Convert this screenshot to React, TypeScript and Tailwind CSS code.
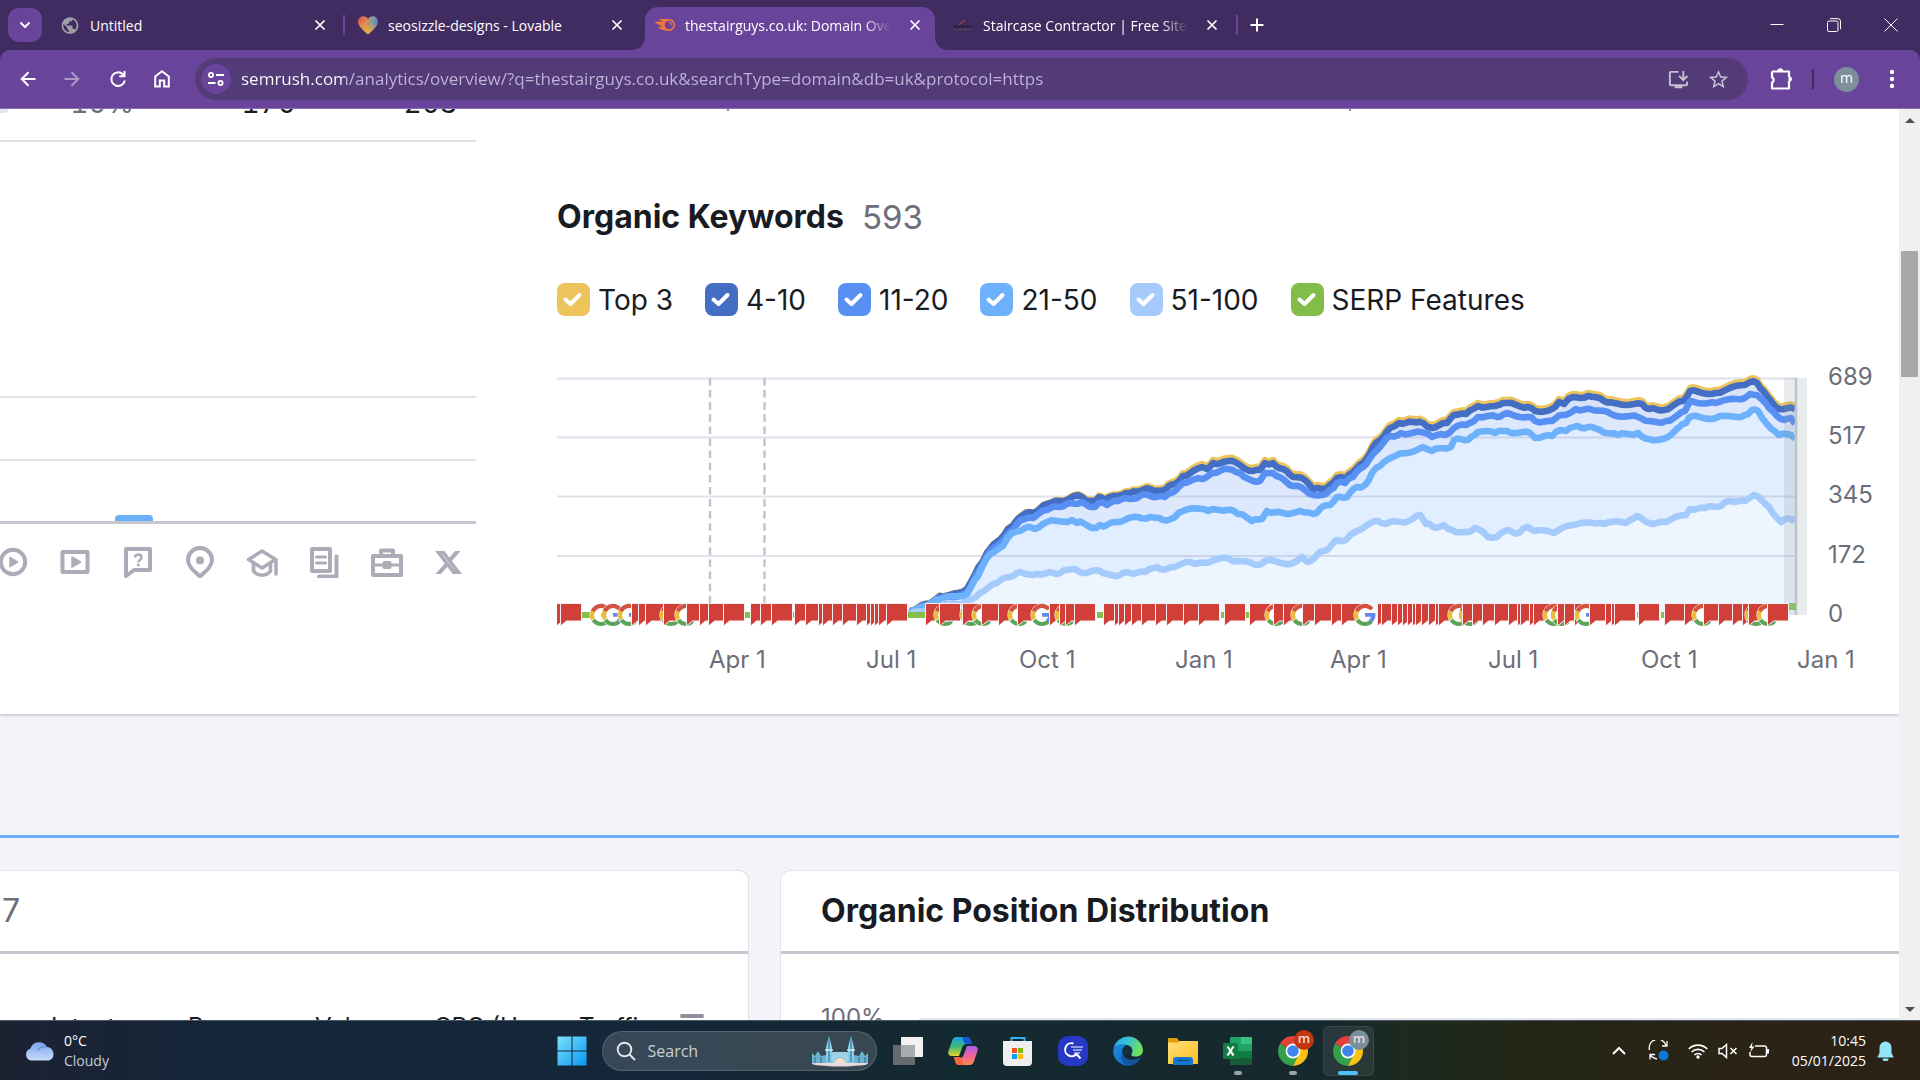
import React, { ReactNode } from "react";
import { FcGoogle } from "react-icons/fc";
import { SiSemrush } from "react-icons/si";
import { MdInstallDesktop, MdStarOutline, MdOutlineExtension, MdPublic } from "react-icons/md";
import { FaXTwitter } from "react-icons/fa6";

type Pt = [number, number];

/* ---------- Browser chrome ---------- */

function CloseX() {
  return (
    <svg viewBox="0 0 12 12" className="h-3 w-3" stroke="#fff" strokeWidth="1.7" fill="none">
      <path d="M1.5 1.5 10.5 10.5M10.5 1.5 1.5 10.5" />
    </svg>
  );
}

function Tab({ icon, title, active = false, fade = false, className = "" }: { icon: ReactNode; title: string; active?: boolean; fade?: boolean; className?: string }) {
  return (
    <div
      className={
        "flex shrink-0 items-center " +
        (active ? "relative h-[43px] self-end rounded-t-[13px] bg-[#68459a] pb-[7px] " : "h-[50px] ") +
        className
      }
    >
      {active && (
        <>
          <svg viewBox="0 0 13 13" className="absolute bottom-0 -left-[13px] h-[13px] w-[13px]" fill="#68459a"><path d="M13 0v13H0A13 13 0 0 0 13 0z" /></svg>
          <svg viewBox="0 0 13 13" className="absolute -right-[13px] bottom-0 h-[13px] w-[13px]" fill="#68459a"><path d="M0 0v13h13A13 13 0 0 1 0 0z" /></svg>
        </>
      )}
      <span className="flex h-5 w-5 shrink-0 items-center justify-center">{icon}</span>
      <button
        className={
          "ml-[10px] min-w-0 flex-1 overflow-hidden pt-[2px] text-left text-[14px] leading-5 whitespace-nowrap text-white " +
          (fade ? "[mask-image:linear-gradient(to_right,#000_86%,transparent_99%)]" : "")
        }
      >
        {title}
      </button>
      <button aria-label={"Close " + title} className="ml-[16px] shrink-0"><CloseX /></button>
    </div>
  );
}

function TabStrip() {
  return (
    <div className="flex h-[50px] items-center bg-[#412c62] pl-2">
      <button aria-label="Search tabs" className="flex h-[34px] w-[34px] shrink-0 items-center justify-center rounded-[11px] bg-[#68459a]">
        <svg viewBox="0 0 12 8" className="h-2 w-3" fill="none" stroke="#fff" strokeWidth="2"><path d="M1.5 1.5 6 6l4.500-4.500" /></svg>
      </button>
      <Tab className="ml-[18px] w-[266px]" title="Untitled" icon={<MdPublic className="h-[21px] w-[21px] text-[#9aa0a6]" />} />
      <div className="ml-[17px] h-5 w-[2px] shrink-0 bg-[#68459a]" />
      <Tab
        className="ml-[13px] w-[265px]"
        title="seosizzle-designs - Lovable"
        icon={
          <svg viewBox="0 0 20 19" className="h-[19px] w-5">
            <defs>
              <linearGradient id="heart" x1="0" y1="0" x2="1" y2="0.3">
                <stop offset="0" stopColor="#e0503f" /><stop offset=".45" stopColor="#d98a5a" /><stop offset=".75" stopColor="#7aa0a8" /><stop offset="1" stopColor="#4a78e0" />
              </linearGradient>
              <linearGradient id="heartLow" x1="0" y1="0" x2="0" y2="1">
                <stop offset=".3" stopColor="#e9a23a" stopOpacity="0" /><stop offset=".8" stopColor="#e9a840" />
              </linearGradient>
            </defs>
            <path d="M10 18.500C4 13 0 9.500 0 5.500A5.200 5.200 0 0 1 5.300.3C7.500.3 9.200 1.500 10 3 10.800 1.500 12.500.3 14.700.3A5.200 5.200 0 0 1 20 5.500c0 4-4 7.500-10 13z" fill="url(#heart)" />
            <path d="M10 18.500C4 13 0 9.500 0 5.500A5.200 5.200 0 0 1 5.300.3C7.500.3 9.200 1.500 10 3 10.800 1.500 12.500.3 14.700.3A5.200 5.200 0 0 1 20 5.500c0 4-4 7.500-10 13z" fill="url(#heartLow)" />
          </svg>
        }
      />
      <Tab active fade className="ml-[22px] w-[290px] pl-[10px] pr-[14px]" title="thestairguys.co.uk: Domain Overview" icon={<SiSemrush className="h-5 w-5 text-[#f0763c]" />} />
      <Tab
        fade
        className="ml-[18px] w-[265px]"
        title="Staircase Contractor | Free Site Meeting"
        icon={
          <svg viewBox="0 0 20 12" className="h-3 w-5">
            <path d="M6 6 12 1" stroke="#8a4a4a" strokeWidth="1.200" />
            <path d="M1 7.500h18" stroke="#241a38" strokeWidth="1.800" strokeDasharray="3 1" />
            <path d="M1 10.500h18" stroke="#64405c" strokeWidth="1" />
          </svg>
        }
      />
      <div className="ml-[18px] h-5 w-[2px] shrink-0 bg-[#68459a]" />
      <button aria-label="New tab" className="ml-[12px] shrink-0">
        <svg viewBox="0 0 14 14" className="h-[14px] w-[14px]" stroke="#fff" strokeWidth="2"><path d="M7 .5v13M.5 7h13" /></svg>
      </button>
      <div className="ml-auto flex items-center gap-[43px] pr-[22px]">
        <button aria-label="Minimise"><svg viewBox="0 0 14 14" className="h-[14px] w-[14px]" stroke="#fff"><path d="M.5 6.500h13" /></svg></button>
        <button aria-label="Restore">
          <svg viewBox="0 0 14 14" className="h-[14px] w-[14px]" stroke="#fff" fill="none"><rect x=".5" y="3" width="10.500" height="10.500" rx="1.500" /><path d="M3 .7h8a2.500 2.500 0 0 1 2.500 2.500v8" /></svg>
        </button>
        <button aria-label="Close window"><svg viewBox="0 0 14 14" className="h-[14px] w-[14px]" stroke="#fff" fill="none"><path d="M.5.5l13 13M13.500.5l-13 13" /></svg></button>
      </div>
    </div>
  );
}

function Toolbar() {
  const s = { fill: "none", stroke: "#fff", strokeWidth: 2 };
  return (
    <div className="bg-[#412c62]">
      <div className="flex h-[59px] items-center rounded-t-[10px] border-b border-[#8c6fb5] bg-[#68459a] pl-5">
        <button aria-label="Back"><svg viewBox="0 0 16 16" className="h-4 w-4" {...s}><path d="M15.500 8H2M8.500 1.200 1.700 8l6.800 6.800" /></svg></button>
        <button aria-label="Forward" className="ml-7 opacity-45"><svg viewBox="0 0 16 16" className="h-4 w-4" {...s}><path d="M.5 8H14M7.500 1.200 14.300 8l-6.800 6.800" /></svg></button>
        <button aria-label="Reload" className="ml-[29px]"><svg viewBox="0 0 18 18" className="h-[18px] w-[18px]" {...s}><path d="M15.800 10.500A6.800 6.800 0 1 1 13.800 4.200L15.500 6" /><path d="M15.500 1v5.200h-5.200" /></svg></button>
        <button aria-label="Home" className="ml-[27px]"><svg viewBox="0 0 16 18" className="h-[18px] w-4" {...s}><path d="M1.200 16.500V6.500L8 1.300l6.800 5.200v10h-4.600v-6H5.800v6z" /></svg></button>
        <div className="ml-[25px] flex h-[42px] min-w-0 flex-1 items-center rounded-full bg-[#533b78] pl-[6px] pr-[18px]">
          <button aria-label="Site information" className="flex h-[30px] w-[30px] shrink-0 items-center justify-center rounded-full bg-[#68459a]">
            <svg viewBox="0 0 16 14" className="h-[14px] w-4" fill="none" stroke="#fff" strokeWidth="1.800"><circle cx="3" cy="3" r="2.100" /><path d="M8 3h8M0 11h7.500" /><circle cx="12.500" cy="11" r="2.100" /></svg>
          </button>
          <input
            aria-label="Address"
            className="ml-[10px] min-w-0 flex-1 bg-[linear-gradient(to_right,#ffffff_104px,#c3b3dc_104px)] bg-clip-text text-[17px] leading-6 text-transparent outline-none"
            defaultValue="semrush.com/analytics/overview/?q=thestairguys.co.uk&searchType=domain&db=uk&protocol=https"
          />
          <button aria-label="Install app"><MdInstallDesktop className="h-[23px] w-[23px] text-[#c8bfd0]" /></button>
          <button aria-label="Bookmark" className="ml-[17px]"><MdStarOutline className="h-[23px] w-[23px] text-[#c8bfd0]" /></button>
        </div>
        <button aria-label="Extensions" className="ml-[22px]">
          <svg viewBox="0 0 22 24" className="h-6 w-[22px]" fill="none" stroke="#fff" strokeWidth="2.200" strokeLinejoin="round">
            <path d="M2 4.500h17v5.500M19 14v7.500H2v-5.700a3.200 3.200 0 0 0 0-5.600V4.500" />
            <path d="M7.500 4.500a2.800 2.800 0 0 1 5.600 0zM19 9.500a2.500 2.500 0 0 1 0 5z" fill="#fff" strokeWidth="1" />
          </svg>
        </button>
        <div className="ml-[20px] h-5 w-[2px] bg-[#412c62]" />
        <button aria-label="Profile" className="ml-[20px] flex h-[25px] w-[25px] items-center justify-center rounded-full bg-[#7e8f9c] pb-[2px] text-[14px] leading-none text-white">m</button>
        <button aria-label="Menu" className="ml-[30px] mr-[25px]">
          <svg viewBox="0 0 6 20" className="h-5 w-[6px]" fill="#fff"><circle cx="3" cy="3" r="2.200" /><circle cx="3" cy="10" r="2.200" /><circle cx="3" cy="17" r="2.200" /></svg>
        </button>
      </div>
    </div>
  );
}

/* ---------- Left SERP feature column ---------- */

function SerpIcons() {
  const base = "h-8 w-8 justify-self-center";
  const st = { fill: "none", stroke: "#abacb8", strokeWidth: 4, strokeLinejoin: "round" as const };
  return (
    <div className="-ml-[18px] mt-[22px] grid w-[498px] grid-cols-8 items-center">
      <svg viewBox="0 0 32 32" className={base} {...st}><circle cx="16" cy="16" r="12.200" /><path d="M13 11.500 20.500 16 13 20.500z" fill="#abacb8" strokeWidth="1.500" /></svg>
      <svg viewBox="0 0 32 32" className={base} {...st}><rect x="3.500" y="6" width="25" height="20" /><path d="M13 11 21.500 16 13 21z" fill="#abacb8" strokeWidth="1.500" /></svg>
      <svg viewBox="0 0 32 32" className={base} {...st}><path d="M4 3h24v21H12l-8 6z" /><path d="M13 11.500c0-4 6.500-4 6.500 0 0 2.500-3.200 2.500-3.200 5" strokeWidth="2.400" /><circle cx="16.300" cy="19" r=".6" strokeWidth="1.800" /></svg>
      <svg viewBox="0 0 32 32" className={base} {...st}><path d="M16 30.500C9 24 4 20 4 14a12 12 0 0 1 24 0c0 6-5 10-12 16.500z" /><circle cx="16" cy="14.500" r="4" fill="#abacb8" stroke="none" /></svg>
      <svg viewBox="0 0 32 32" className={base} {...st} strokeWidth={3.6}><path d="M2.500 13.500 16 5l13.500 8.500L16 22z" /><path d="M7.500 17.500V25c4 5.500 13 5.500 17 0v-7.500" /><path d="M30 14v14" strokeLinecap="round" /></svg>
      <svg viewBox="0 0 32 32" className={base} {...st}><path d="M4 3h18v22H4z" /><path d="M8.500 11h9M8.500 17h9" strokeWidth="3" strokeLinecap="round" /><path d="M28.500 10.500v20H11" strokeLinecap="round" /></svg>
      <svg viewBox="0 0 34 32" className="h-8 w-[34px] justify-self-center" {...st}><path d="M3 10h28v19H3zM11 10V4.500h12V10" /><path d="M3 19h28" strokeWidth="3" /><rect x="14.500" y="17" width="5" height="4" fill="#abacb8" /></svg>
      <FaXTwitter className="h-[27px] w-[27px] justify-self-center overflow-visible stroke-[#abacb8] stroke-[24] text-[#abacb8]" />
    </div>
  );
}

function FeatureColumn() {
  return (
    <div className="w-[476px] shrink-0">
      <div className="flex h-[31px] tabular-nums">
        <div className="h-[4px] w-2 rounded-br-[8px] bg-[#e4e5ea]" />
        <div className="-mt-5 w-[126px] text-right text-[28px] leading-7 text-[#6c6e79]">10%</div>
        <div className="-mt-5 w-[162px] text-right text-[28px] leading-7">170</div>
        <div className="-mt-5 w-[162px] text-right text-[28px] leading-7">203</div>
      </div>
      <div className="h-[2px] bg-[#e0e1e6]" />
      <div className="h-[256px] border-b-2 border-[#e0e1e9]" />
      <div className="h-[63px] border-b-2 border-[#e0e1e9]" />
      <div className="flex h-[63px] items-end border-b-[3px] border-[#c4c7cf]">
        <div className="ml-[115px] h-[6px] w-[38px] rounded-t-[4px] bg-[#6cb0fa]" />
      </div>
      <SerpIcons />
    </div>
  );
}

/* ---------- Organic keywords chart ---------- */

const DARK: Pt[] = [
  [910,611],[926,604],[940,596],[950,595],[967,589],[972,580],[978,568],[987,553],[997,542],[1008,529],[1017,520],[1023,515],[1033,513],[1047,504],[1060,501],[1072,497],[1082,497],[1090,501],[1095,501],[1099,497],[1105,500],[1118,496],[1130,493],[1140,491],[1150,489],[1165,490],[1175,484],[1183,476],[1193,471],[1202,467],[1207,469],[1213,463],[1228,461],[1240,465],[1253,471],[1260,470],[1265,463],[1273,463],[1283,469],[1293,477],[1305,480],[1313,489],[1322,489],[1330,485],[1337,478],[1345,479],[1353,472],[1363,463],[1373,447],[1380,440],[1390,428],[1399,423],[1413,422],[1423,423],[1432,428],[1447,423],[1454,415],[1466,414],[1478,406],[1495,406],[1507,403],[1528,407],[1535,411],[1552,409],[1559,402],[1564,404],[1573,397],[1588,396],[1604,401],[1614,403],[1642,404],[1649,409],[1664,410],[1683,401],[1690,391],[1716,393],[1745,385],[1750,382],[1757,383],[1767,396],[1779,409],[1795,409],
];
const MEDIUM: Pt[] = [
  [910,612],[926,606],[940,598],[950,597],[967,592],[978,572],[987,556],[997,546],[1010,532],[1017,524],[1025,519],[1033,518],[1047,510],[1060,507],[1070,503],[1082,502],[1090,507],[1095,507],[1099,503],[1107,505],[1118,501],[1130,499],[1140,496],[1150,496],[1165,497],[1175,491],[1183,483],[1202,479],[1213,473],[1228,469],[1240,473],[1253,481],[1260,481],[1265,473],[1273,473],[1283,479],[1293,486],[1305,490],[1313,495],[1322,495],[1330,490],[1337,483],[1345,483],[1353,477],[1363,467],[1373,454],[1380,447],[1390,436],[1401,433],[1421,432],[1432,437],[1445,435],[1454,428],[1466,425],[1478,417],[1497,417],[1507,413],[1528,417],[1535,421],[1552,421],[1562,415],[1576,409],[1590,409],[1611,414],[1638,417],[1649,421],[1666,421],[1685,411],[1690,401],[1716,403],[1745,398],[1750,394],[1757,395],[1769,408],[1781,419],[1791,418],[1795,424],
];
const LIGHT: Pt[] = [
  [910,613],[926,606],[940,600],[967,594],[978,576],[987,558],[997,550],[1003,546],[1012,533],[1025,528],[1035,529],[1047,522],[1072,520],[1077,523],[1083,523],[1092,528],[1100,525],[1107,525],[1120,522],[1138,517],[1150,517],[1163,520],[1175,517],[1183,511],[1202,509],[1208,511],[1227,510],[1238,514],[1252,521],[1262,519],[1267,511],[1283,513],[1300,511],[1313,514],[1320,509],[1330,505],[1337,497],[1347,497],[1357,487],[1365,485],[1372,473],[1380,466],[1397,455],[1423,447],[1432,451],[1451,447],[1454,440],[1468,440],[1478,432],[1495,433],[1507,431],[1530,433],[1535,438],[1552,436],[1561,430],[1566,431],[1578,426],[1588,427],[1600,430],[1618,435],[1638,433],[1649,439],[1666,438],[1686,423],[1692,416],[1716,418],[1745,415],[1752,410],[1758,411],[1767,424],[1779,435],[1791,435],[1795,439],
];
const PALE: Pt[] = [
  [910,614],[940,606],[968,601],[980,593],[997,583],[1010,577],[1020,572],[1037,574],[1050,572],[1060,573],[1075,569],[1087,573],[1100,571],[1110,575],[1120,575],[1130,573],[1145,572],[1157,567],[1167,569],[1177,566],[1190,562],[1207,563],[1228,558],[1237,561],[1255,565],[1265,561],[1293,563],[1302,557],[1307,562],[1317,555],[1327,550],[1337,540],[1347,539],[1357,531],[1378,521],[1388,523],[1409,521],[1420,515],[1426,524],[1433,527],[1444,525],[1452,530],[1468,532],[1475,528],[1488,537],[1497,537],[1509,530],[1519,533],[1528,527],[1535,531],[1554,533],[1573,525],[1600,523],[1626,523],[1637,516],[1649,523],[1666,522],[1686,515],[1690,509],[1705,508],[1721,506],[1731,501],[1745,501],[1754,495],[1769,507],[1781,522],[1791,519],[1795,521],
];
const TOTAL: Pt[] = DARK.map(([x, y]) => [x, y - Math.min(3, Math.max(0.4, (x - 1020) / 60))]);

/* Daily samples between the weekly points give the lines their uneven edge. */
function daily(points: Pt[], seed: number): Pt[] {
  const out: Pt[] = [];
  for (let i = 0; i < points.length - 1; i++) {
    const [x0, y0] = points[i];
    const [x1, y1] = points[i + 1];
    const steps = Math.max(1, Math.round((x1 - x0) / 4));
    for (let k = 0; k < steps; k++) {
      const t = k / steps;
      const wobble = k === 0 ? 0 : Math.sin((x0 + k * 3) * 2.3 + seed) * 1.6;
      out.push([x0 + (x1 - x0) * t, y0 + (y1 - y0) * t + wobble]);
    }
  }
  out.push(points[points.length - 1]);
  return out;
}
const line = (p: Pt[], seed: number) => "M" + daily(p, seed).map(([x, y]) => x.toFixed(1) + " " + y.toFixed(1)).join("L");
const area = (p: Pt[], seed: number) => line(p, seed) + "L1795 615L910 615Z";

const FLAGS: (number | [number])[] = [
  557,561,[590],[602],[618],632,639,646,[660],664,[675],687,700,709,724,751,761,772,795,806,819,823,833,843,857,867,871,875,879,887,
  926,[934],940,[960],963,[972],982,999,[1008],1018,[1031],1050,[1055],1060,1066,1075,1104,1115,1119,1125,1132,1142,1156,1167,1184,1199,1225,1250,[1265],1274,1284,[1291],1303,1315,1332,1342,[1354],
  1378,1382,1392,1398,1403,1408,1413,1416,1422,1429,1436,1439,[1448],[1459],1463,1473,1483,1495,1509,1518,1521,1530,1534,[1543],[1551],1558,1565,1575,[1575],1590,1606,1612,1615,1639,1665,1685,[1692],1704,1719,1733,1743,[1745],1749,[1757],1768,
];
const GREEN: Pt[] = [[582,8],[745,6],[793,2],[908,18],[1097,7],[1221,4],[1246,4],[1637,2],[1661,4]];

function KeywordsChart() {
  const series: [Pt[], string, number][] = [
    [TOTAL, "#edc35b", 1],[DARK, "#436ec4", 1],[MEDIUM, "#588ff3", 2],[LIGHT, "#6db0fb", 3],[PALE, "#a5cbfd", 4],
  ];
  return (
    <svg viewBox="557 366 1342 324" className="mt-[50px] block w-full" role="img" aria-label="Organic keywords over time">
      <path d={area(DARK, 1)} fill="#d9e3f8" />
      <path d={area(MEDIUM, 2)} fill="#dde8fc" />
      <path d={area(LIGHT, 3)} fill="#e0eeff" />
      <path d={area(PALE, 4)} fill="#edf5ff" />
      <path d="M557 378.500H1797M557 437.500H1797M557 496.500H1797M557 556H1797" stroke="#8287af" strokeOpacity=".25" strokeWidth="2.200" />
      <path d="M710 378V604M764.500 378V604" stroke="#c0c4c9" strokeWidth="2.400" strokeDasharray="7.500 4.600" />
      {series.map(([p, color, seed]) => (
        <path key={color} d={line(p, seed)} fill="none" stroke={color} strokeWidth="6.600" strokeLinejoin="round" />
      ))}
      <rect x="1784" y="378" width="23" height="237" fill="#8c9a98" fillOpacity=".19" />
      <path d="M1796 378V615" stroke="#bcc3c9" strokeWidth="2.500" />
      {GREEN.map(([x, w]) => <rect key={x} x={x} y="612" width={w} height="6" fill="#82bf4b" />)}
      <rect x="1789" y="603" width="7" height="7" fill="#8dc165" />
      {FLAGS.map((f, i) =>
        typeof f === "number" ? (
          <path key={i} d={`M${f - 0.5} 603.500h21v17.500h-15l-6 5z`} fill="#d04038" stroke="#fbeeee" strokeWidth="1" />
        ) : (
          <g key={i}>
            <circle cx={f[0] + 11} cy="615" r="11.500" fill="#fff" />
            <circle cx={f[0] + 11} cy="615" r="9" fill="none" stroke="#5ba55a" strokeWidth="4.200" strokeDasharray="16 41" transform={`rotate(45 ${f[0] + 11} 615)`} />
            <circle cx={f[0] + 11} cy="615" r="9" fill="none" stroke="#eabd3c" strokeWidth="4.200" strokeDasharray="9 48" transform={`rotate(152 ${f[0] + 11} 615)`} />
            <circle cx={f[0] + 11} cy="615" r="9" fill="none" stroke="#d2533f" strokeWidth="4.200" strokeDasharray="18 39" transform={`rotate(205 ${f[0] + 11} 615)`} />
            <path d={`M${f[0] + 11} 613h10.500c.4 4-1 7.500-3.700 9.800l-3-2.800c1.200-.9 2-2 2.300-3.200h-6.100z`} fill="#6387ec" />
          </g>
        ),
      )}
      <g fill="#6c6e79" fontSize="24" fontFamily="Inter, sans-serif">
        <text x="709" y="668">Apr 1</text>
        <text x="866" y="668">Jul 1</text>
        <text x="1019" y="668">Oct 1</text>
        <text x="1175" y="668">Jan 1</text>
        <text x="1330" y="668">Apr 1</text>
        <text x="1488" y="668">Jul 1</text>
        <text x="1641" y="668">Oct 1</text>
        <text x="1797" y="668">Jan 1</text>
        <text x="1828" y="385">689</text>
        <text x="1828" y="444">517</text>
        <text x="1828" y="503">345</text>
        <text x="1828" y="563">172</text>
        <text x="1828" y="622">0</text>
      </g>
    </svg>
  );
}

function LegendItem({ label, box }: { label: string; box: string }) {
  return (
    <label className="flex items-center gap-2 text-[28px] leading-[33px] whitespace-nowrap">
      <span className="relative block h-[33px] w-[33px]">
        <input type="checkbox" defaultChecked className={"block h-[33px] w-[33px] appearance-none rounded-[8px] " + box} />
        <svg viewBox="0 0 33 33" className="pointer-events-none absolute inset-0" fill="none" stroke="#fff" strokeWidth="4" strokeLinecap="round" strokeLinejoin="round"><path d="M8.500 16.500l5 4.500 9-9" /></svg>
      </span>
      <span className="pt-[2px]">{label}</span>
    </label>
  );
}

function KeywordsPanel() {
  return (
    <section className="relative ml-[81px] min-w-0 flex-1 pt-[89px] pb-6">
      <span className="absolute top-0 left-[170px] h-[2px] w-[2px] bg-[#8a8c98]" />
      <span className="absolute top-0 left-[792px] h-[2px] w-[2px] bg-[#8a8c98]" />
      <h2 className="flex gap-[18px] text-[32px] leading-[38px] font-bold">
        Organic Keywords <span className="text-[33px] font-normal text-[#6c6e79]">593</span>
      </h2>
      <div className="mt-[47px] flex h-[33px] items-center gap-8">
        <LegendItem label="Top 3" box="bg-[#edc35b]" />
        <LegendItem label="4-10" box="bg-[#436ec4]" />
        <LegendItem label="11-20" box="bg-[#588ff3]" />
        <LegendItem label="21-50" box="bg-[#6db0fb]" />
        <LegendItem label="51-100" box="bg-[#a5cbfd]" />
        <LegendItem label="SERP Features" box="bg-[#81bd48]" />
      </div>
      <KeywordsChart />
    </section>
  );
}

function LowerCards() {
  return (
    <div className="flex h-[240px] pt-[32px]">
      <section className="w-[749px] shrink-0 overflow-hidden rounded-tr-[10px] border-t border-r border-[#e0e1e9] bg-white">
        <div className="flex h-[83px] items-center border-b-[3px] border-[#c4c7cf] pl-[2px] text-[32px] text-[#6c6e79]">7</div>
        <table className="mt-[61px] w-[720px] table-fixed text-[24px] leading-6">
          <thead>
            <tr className="text-left align-top whitespace-nowrap [&>th]:p-0 [&>th]:font-normal">
              <th className="w-[51px]" aria-label="Keyword" />
              <th className="w-[137px]">Intent</th>
              <th className="w-[127px]">Pos.</th>
              <th className="w-[119px]">Volume</th>
              <th className="w-[145px]">CPC (U...</th>
              <th className="w-[101px]">Traffic</th>
              <th className="align-top"><span className="block h-[4px] w-6 -translate-y-px rounded bg-[#8f919d]" /></th>
            </tr>
          </thead>
        </table>
      </section>
      <section className="ml-[31px] min-w-0 flex-1 rounded-tl-[10px] border-t border-l border-[#e0e1e9] bg-white">
        <h2 className="flex h-[83px] items-center border-b-[3px] border-[#c4c7cf] pl-[40px] text-[32px] font-bold whitespace-nowrap">Organic Position Distribution</h2>
        <div className="mt-[52px] flex items-start pl-[40px] text-[24px] leading-6 text-[#6c6e79]">
          100%
          <div className="mt-[12px] ml-[34px] h-[2px] flex-1 bg-[#e8e9ee]" />
        </div>
      </section>
    </div>
  );
}

/* ---------- Taskbar ---------- */

function Chrome({ badge, id }: { badge: string; id: string }) {
  return (
    <span className="relative block">
      <svg viewBox="0 0 30 30" className="h-[30px] w-[30px]">
        <defs><clipPath id={id}><circle cx="15" cy="15" r="15" /></clipPath></defs>
        <g clipPath={"url(#" + id + ")"}>
          <path d="M15 15 2 7.500-5 20l18 14 8.500-15z" fill="#34a04a" />
          <path d="M15 15 2 7.500V-5h30v13.500H15z" fill="#e0413a" />
          <path d="M15 8.200h20V35H12.500l8.400-16.500z" fill="#fbc116" />
        </g>
        <circle cx="15" cy="15" r="7.400" fill="#fff" /><circle cx="15" cy="15" r="5.800" fill="#4084ee" />
      </svg>
      <span className={"absolute -top-[6px] left-4 flex h-5 w-5 items-center justify-center rounded-full pb-[2px] text-[13px] leading-none font-semibold text-[#f0dcd4] " + badge}>m</span>
    </span>
  );
}

function TaskButton({ label, children, active = false, mark = "" }: { label: string; children: ReactNode; active?: boolean; mark?: string }) {
  return (
    <button aria-label={label} className={"relative mx-[2px] flex h-[50px] w-[51px] items-center justify-center rounded-[6px] " + (active ? "bg-white/8 ring-1 ring-white/8 ring-inset" : "")}>
      {children}
      {mark && <span className={"absolute bottom-[1px] left-1/2 h-1 -translate-x-1/2 rounded-full " + mark} />}
    </button>
  );
}

function Taskbar() {
  return (
    <footer className="grid h-[60px] shrink-0 grid-cols-[1fr_auto_1fr] items-center border-t border-[#4c5663] bg-[linear-gradient(to_right,#1c2232_0%,#14263a_12%,#14283a_35%,#142a31_50%,#15282d_69%,#1c2a20_73%,#242615_80%,#2a2316_92%,#2c2216_100%)] text-[14px] text-white">
      <button className="ml-[24px] flex items-center justify-self-start text-left">
        <svg viewBox="0 0 32 22" className="h-[22px] w-8">
          <defs><linearGradient id="cloud" x1="0" y1="0" x2="0" y2="1"><stop offset="0" stopColor="#7ba4f0" /><stop offset="1" stopColor="#c9dcfb" /></linearGradient></defs>
          <path d="M7 20.500A6.200 6.200 0 0 1 6.500 8.500 9 9 0 0 1 23 7a7 7 0 0 1 2 13.500z" fill="url(#cloud)" />
          <path d="M14 10.500a8 8 0 0 1 9-3.500" stroke="#6c8fe0" strokeWidth="1.500" fill="none" />
        </svg>
        <span className="ml-2">
          <span className="block leading-5">0°C</span>
          <span className="block leading-5 text-[#c6ccd4]">Cloudy</span>
        </span>
      </button>
      <div className="flex items-center pl-3">
        <button aria-label="Start">
          <svg viewBox="0 0 30 30" className="h-[30px] w-[30px]">
            <defs><linearGradient id="win" x1="0" y1="0" x2="1" y2="1"><stop offset="0" stopColor="#7de0fb" /><stop offset="1" stopColor="#0797f5" /></linearGradient></defs>
            <path d="M.5.5h14v14H.5zM15.500.5h14v14h-14zM.5 15.500h14v14H.5zM15.500 15.500h14v14h-14z" fill="url(#win)" />
          </svg>
        </button>
        <label className="ml-[15px] flex h-10 w-[275px] items-center rounded-full border border-white/15 bg-white/15 pl-[13px] pr-[7px]">
          <svg viewBox="0 0 20 20" className="h-5 w-5 shrink-0" fill="none" stroke="#e4e8ea" strokeWidth="1.900"><circle cx="8.500" cy="8.500" r="6.800" /><path d="M13.500 13.500 19 19" /></svg>
          <input placeholder="Search" aria-label="Search" className="ml-[12px] w-full min-w-0 flex-1 bg-transparent text-[16px] outline-none placeholder:text-[#c9d0d4]" />
          <svg viewBox="0 0 58 32" className="h-8 w-[58px] shrink-0">
            <ellipse cx="29" cy="28.500" rx="28" ry="3" fill="#ead9da" />
            <path d="M1 28V18l3 3 3-5 3 5 5-1v8zM57 28V18l-3 3-3-5-3 5-5-1v8z" fill="#6fb2cf" />
            <path d="M4 22v6M10 22v6M48 22v6M54 22v6" stroke="#3d83b0" strokeWidth="1.500" />
            <path d="M15 28V12l3-11 3 11v16zM37 28V12l3-11 3 11v16z" fill="#8accdf" />
            <path d="M18 2v25M40 2v25" stroke="#4391bd" strokeWidth="1.600" />
            <path d="M14 15h8M36 15h8" stroke="#d5eef4" strokeWidth="1.500" />
            <path d="M21 28V17h16v11h-3c0-7-10-7-10 0z" fill="#9ad3e6" />
            <path d="M24 28c0-7 10-7 10 0z" fill="#f6dfca" />
          </svg>
        </label>
        <div className="ml-[4px] flex">
          <TaskButton label="Task view">
            <svg viewBox="0 0 30 28" className="h-7 w-[30px]"><rect x="8" y="0" width="22" height="20" rx="1" fill="#f2f2f2" /><rect x="0" y="8" width="22" height="20" rx="1" fill="#686b6d" /><path d="M8 8h14v12H8z" fill="#a9abac" /></svg>
          </TaskButton>
          <TaskButton label="Copilot">
            <svg viewBox="0 0 30 28" className="h-7 w-[30px]">
              <defs>
                <linearGradient id="cpA" x1="0" y1="0" x2="0" y2="1"><stop offset="0" stopColor="#19a0e8" /><stop offset=".5" stopColor="#3fb878" /><stop offset="1" stopColor="#e8d030" /></linearGradient>
                <linearGradient id="cpB" x1="0" y1="0" x2="0" y2="1"><stop offset="0" stopColor="#a560ee" /><stop offset=".5" stopColor="#f0649a" /><stop offset="1" stopColor="#fb8a4c" /></linearGradient>
              </defs>
              <path d="M8 0h11c2 0 3 1 3.500 3L24 7h-5c-3 0-4 1-5 4l-3 8H4c-3 0-4.500-2-3.500-5L4 4c.8-2.500 2-4 4-4z" fill="url(#cpA)" />
              <path d="M14 0h5c2 0 3 1 3.500 3L24 7h-5c-2 0-3-1-3.500-3C15 2 15 1 14 0z" fill="#1a52cf" />
              <path d="M22 28H11c-2 0-3-1-3.500-3L6 21h5c3 0 4-1 5-4l3-8h7c3 0 4.500 2 3.500 5L26 24c-.8 2.500-2 4-4 4z" fill="url(#cpB)" />
              <path d="M11 28c-2 0-3-1-3.500-3L6 20h5c2 0 2.500 1 3 3s1 4 1 5z" fill="#f4693f" />
            </svg>
          </TaskButton>
          <TaskButton label="Microsoft Store">
            <svg viewBox="0 0 30 30" className="h-[30px] w-[30px]"><path d="M8.500 6V2h13v4" stroke="#2cb5ef" strokeWidth="2" fill="none" /><path d="M0 5h29v21a4 4 0 0 1-4 4H4a4 4 0 0 1-4-4z" fill="#efefef" /><path d="M9 12h5v5H9z" fill="#f25022" /><path d="M15 12h5v5h-5z" fill="#7fba00" /><path d="M9 18h5v5H9z" fill="#00a4ef" /><path d="M15 18h5v5h-5z" fill="#ffb900" /></svg>
          </TaskButton>
          <TaskButton label="Search tool">
            <svg viewBox="0 0 30 30" className="h-[30px] w-[30px]" fill="none" stroke="#fff"><rect width="30" height="30" rx="10" fill="#2638c4" stroke="none" /><path d="M15.500 7.500a6.500 6.500 0 1 0 3 10.500M18 17.500l4.500 5" strokeWidth="2" /><path d="M13 11h12M15 14h9M16 17h6" strokeWidth="1.200" /></svg>
          </TaskButton>
          <TaskButton label="Edge">
            <svg viewBox="0 0 30 30" className="h-[30px] w-[30px]">
              <defs>
                <linearGradient id="edgeTop" x1="0" y1="0" x2="1" y2=".3"><stop offset="0" stopColor="#28a8e0" /><stop offset=".5" stopColor="#35c1d6" /><stop offset="1" stopColor="#6fe05c" /></linearGradient>
                <linearGradient id="edgeLow" x1="0" y1="0" x2="1" y2="1"><stop offset="0" stopColor="#1b8ee0" /><stop offset="1" stopColor="#0c62c0" /></linearGradient>
              </defs>
              <path d="M.5 12A15 15 0 0 1 30 14c0 5-4 6.500-7.500 6.500-3 0-5-1-4-2.500 2-2.500 1-8-4.500-9C8 8 2 10 .5 12z" fill="url(#edgeTop)" />
              <path d="M.2 14C1.500 9.500 8 7 13 9.500c-3 1.500-4 4-4 7 0 5 3.500 10 9 13A15 15 0 0 1 .2 14z" fill="url(#edgeLow)" />
              <path d="M10.500 14c-2.500 7 5 13 17 7.500-2 4.500-6.500 8-11.500 8.500-6-1-10.500-9-5.500-16z" fill="#1256a0" />
              <circle cx="15" cy="15.500" r="3.600" fill="#12303c" />
            </svg>
          </TaskButton>
          <TaskButton label="File Explorer">
            <svg viewBox="0 0 30 28" className="h-7 w-[30px]">
              <defs><linearGradient id="fold" x1="0" y1="0" x2="1" y2="1"><stop offset="0" stopColor="#ffe07a" /><stop offset="1" stopColor="#fbbd22" /></linearGradient></defs>
              <path d="M0 2a1 1 0 0 1 1-1h8l3 4h17v6H0z" fill="#dd9f0a" /><path d="M0 5.500h10l2-1.500h17a1 1 0 0 1 1 1v22H0z" fill="url(#fold)" />
              <path d="M5 28v-5a3 3 0 0 1 3-3h14a3 3 0 0 1 3 3v5z" fill="#1478d0" /><path d="M9 23.500h12" stroke="#0b4f98" strokeWidth="1.500" />
            </svg>
          </TaskButton>
          <TaskButton label="Excel" mark="w-2 bg-[#9ca3a6]">
            <svg viewBox="0 0 30 28" className="h-7 w-[30px]"><path d="M7 1a1 1 0 0 1 1-1h10v28H8a1 1 0 0 1-1-1z" fill="#21a366" /><path d="M18 0h10a1 1 0 0 1 1 1v6H18z" fill="#33c481" /><path d="M18 7h11v7H18z" fill="#21a366" /><path d="M7 14h22v7H7z" fill="#107c41" /><path d="M7 21h22v6a1 1 0 0 1-1 1H8a1 1 0 0 1-1-1z" fill="#185c37" /><rect y="6" width="15" height="16" rx="1" fill="#107c41" /><path d="M4.500 9.500l6 9M10.500 9.500l-6 9" stroke="#fff" strokeWidth="2.200" /></svg>
          </TaskButton>
          <TaskButton label="Chrome" mark="w-2 bg-[#9ca3a6]"><Chrome id="chromeA" badge="bg-[#c2350f]" /></TaskButton>
          <TaskButton label="Chrome, current window" active mark="w-5 bg-[#4cc2ff]"><Chrome id="chromeB" badge="bg-[#78909c]" /></TaskButton>
        </div>
      </div>
      <div className="mr-[26px] flex items-center justify-self-end">
        <button aria-label="Hidden icons"><svg viewBox="0 0 14 9" className="h-[9px] w-[14px]" fill="none" stroke="#fff" strokeWidth="2"><path d="M1 8l6-6 6 6" /></svg></button>
        <button aria-label="Sync" className="ml-[22px]"><svg viewBox="0 0 21 21" className="h-[21px] w-[21px]" fill="none" stroke="#fff" strokeWidth="1.300"><path d="M1.500 10A8.500 8.500 0 0 1 18 5.500M19 1v5h-5M9 19a9 9 0 0 1-6.500-4M2 19.500v-5h5" /><circle cx="15.500" cy="15.500" r="5" fill="#0b78d8" stroke="none" /></svg></button>
        <button aria-label="Network, volume and battery" className="ml-[19px] flex items-center gap-[10px]">
          <svg viewBox="0 0 20 16" className="h-4 w-5" fill="none" stroke="#fff" strokeWidth="1.700"><path d="M.8 6a13 13 0 0 1 18.400 0M3.600 9a9 9 0 0 1 12.800 0M6.400 12a5.200 5.200 0 0 1 7.200 0" /><circle cx="10" cy="14" r="1.700" fill="#fff" stroke="none" /></svg>
          <svg viewBox="0 0 20 16" className="h-4 w-5" fill="none" stroke="#fff" strokeWidth="1.500"><path d="M1 5.500h3L8.500 1.500v13L4 10.500H1z" /><path d="M12.500 5l6 6M18.500 5l-6 6" /></svg>
          <svg viewBox="0 0 21 17" className="h-[17px] w-[21px]" fill="none" stroke="#fff" strokeWidth="1.500"><path d="M7 4h9.500a2 2 0 0 1 2 2v6.500a2 2 0 0 1-2 2H4a2 2 0 0 1-2-2V10" /><path d="M20 7v4.500" strokeWidth="2" /><path d="M4.500 0 1 6h2.500L2 10.500 6.500 4.500H4z" fill="#fff" stroke="none" /></svg>
        </button>
        <button className="ml-[23px] text-right">
          <span className="block leading-5">10:45</span>
          <span className="block leading-5">05/01/2025</span>
        </button>
        <button aria-label="Notifications" className="ml-[11px]"><svg viewBox="0 0 17 20" className="h-5 w-[17px]" fill="#93e3fb"><path d="M8.500.5a6 6 0 0 1 6 6v5.500l2 4v.5H.5V16l2-4V6.500a6 6 0 0 1 6-6z" /><path d="M5.500 17.500h6a3 3 0 0 1-6 0z" /></svg></button>
      </div>
    </footer>
  );
}

export default function App() {
  return (
    <div className="flex h-screen flex-col overflow-hidden font-['Open_Sans','Noto_Sans',sans-serif]">
      <TabStrip />
      <Toolbar />
      <div className="flex min-h-0 flex-1">
        <main className="min-w-0 flex-1 overflow-hidden bg-[#f3f4f9] font-['Inter',sans-serif] text-[#191b23]">
          <div className="flex bg-white shadow-[0_1px_3px_rgba(25,27,35,0.3)]">
            <FeatureColumn />
            <KeywordsPanel />
          </div>
          <div className="mt-[121px] h-[3px] bg-[#6cb0fa]" />
          <LowerCards />
        </main>
        <div className="flex w-[21px] shrink-0 flex-col items-center bg-[#f0f0f0] pt-[9px] pb-[8px]">
          <svg viewBox="0 0 10 5" className="h-[5px] w-[10px]" fill="#505050"><path d="M0 5 5 0l5 5z" /></svg>
          <div className="mt-[128px] h-[126px] w-[17px] bg-[#a8a8a8]" />
          <svg viewBox="0 0 10 5" className="mt-auto h-[5px] w-[10px]" fill="#505050"><path d="M0 0 5 5l5-5z" /></svg>
        </div>
      </div>
      <Taskbar />
    </div>
  );
}
